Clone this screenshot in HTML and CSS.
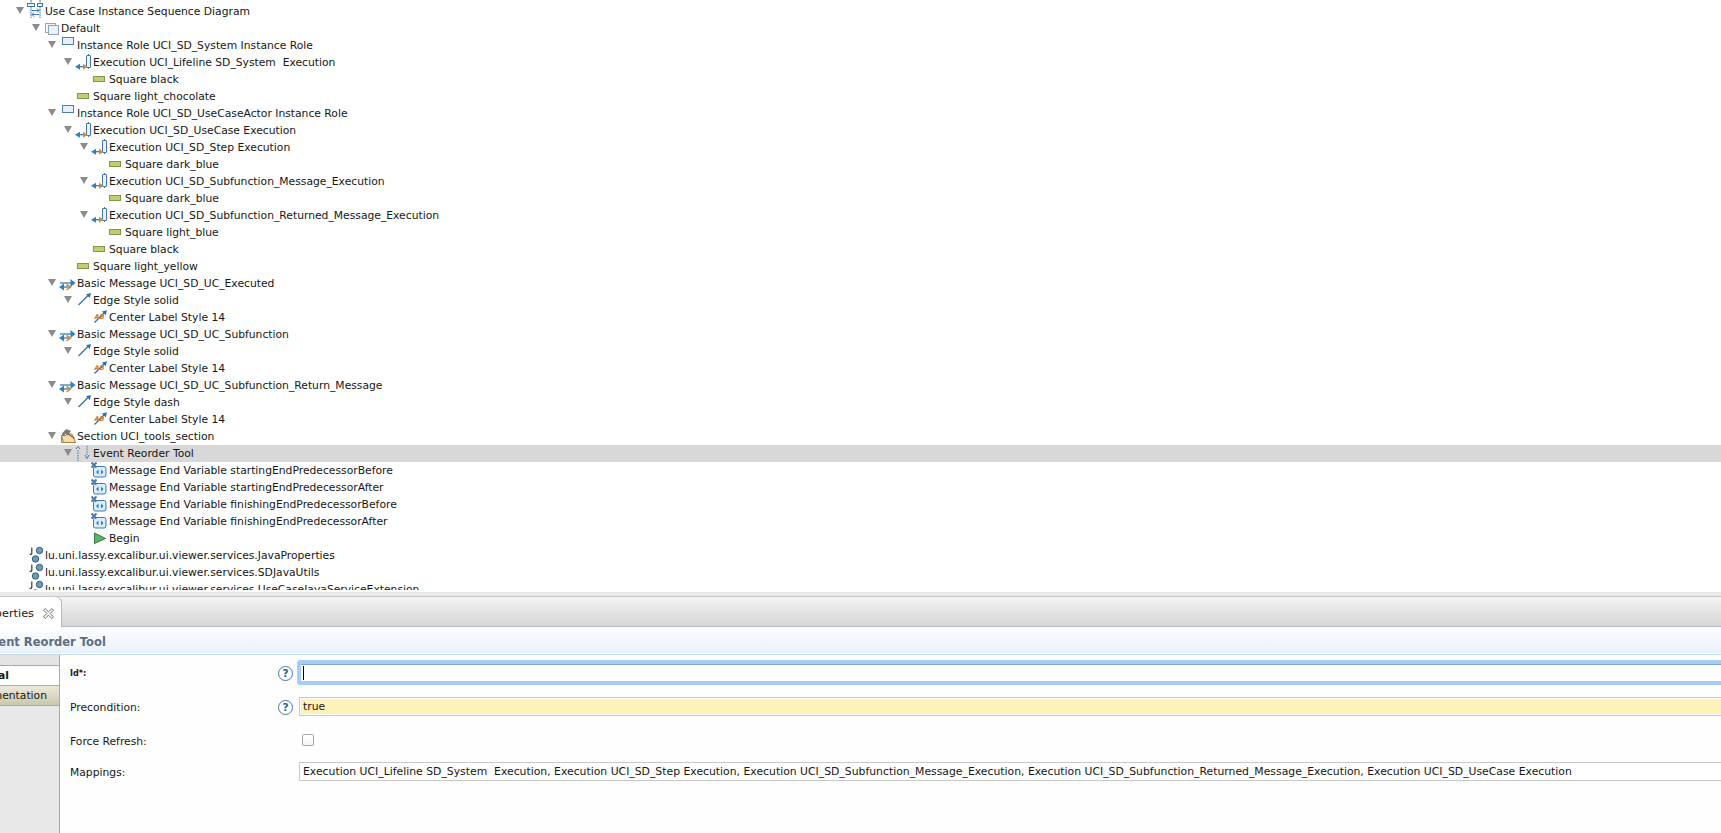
FILE: index.html
```html
<!DOCTYPE html>
<html lang="en"><head><meta charset="utf-8"><title>Use Case Instance Sequence Diagram</title><link rel="stylesheet" href="styles.css"></head>
<body>
<svg class="defs" width="0" height="0" aria-hidden="true"><defs>
<g id="i-diagram"><path d="M2 -3V.5M11 -3V.5M2 3.5V15M11 3.5V15" class="b1" stroke-dasharray="2 .6"/><rect x="-1.5" y=".5" width="7" height="3" class="bx"/><rect x="8.5" y=".5" width="5" height="3" class="bx"/><path d="M3 7.5H10M8 5.5l2 2-2 2M10 11.5H3M5 9.5l-2 2 2 2" class="b1"/></g>
<g id="i-default"><rect x=".5" y="3.5" width="10" height="9" class="pg"/><rect x="3.5" y="5.5" width="10" height="9" class="pf"/></g>
<g id="i-role"><rect x="1.5" y=".5" width="11" height="7" class="bx2"/></g>
<g id="i-exec"><path d="M11.5 0V15" class="b1"/><rect x="9.5" y="1.5" width="4" height="12" rx=".5" class="bx"/><path d="M0 12.7H8" class="b2"/><path d="M-2 12.7L3 9.7V15.7Z" class="fb"/><path d="M10.5 12.7L6 9.7V15.7Z" class="fo"/></g>
<g id="i-square"><rect x=".5" y="5.5" width="11" height="5" class="sq"/></g>
<g id="i-msg"><path d="M-1 8H11" class="b2"/><path d="M14.5 8L9.5 4V12Z" class="fb"/><path d="M1 12H8" class="b2"/><path d="M-2 12L3 8.5V15.5Z" class="fb"/><path d="M5.5 9.5L9.5 12L5.5 15" class="so"/></g>
<g id="i-edge"><path d="M1.5 13L12 2.5" class="b2"/><path d="M14 1L9 2.2L12.8 6Z" class="fd"/></g>
<g id="i-label"><path d="M1.5 13.5L12 3" class="b2"/><path d="M14 1.2L9 2.4L12.8 6.2Z" class="fd"/><text x="1.5" y="9.5" class="ab">AB</text></g>
<g id="i-section"><path d="M.5 7.5H5L6.500 6H11L14.500 14.500H2.500Z" class="fol"/><path d="M.5 7.500V14.500H14.500" class="fos"/><path d="M5.500 4.500L13.500 10.500" class="han"/><path d="M1 6L5 1.500L9.500 3L6.500 7L4.500 5.500L2.500 7.500Z" class="ham"/></g>
<g id="i-tool"><path d="M1 5V16M10 1V11" class="b1" stroke-dasharray="1.500 1"/><path d="M-1 4L1 1.500L3 4M8 10L10 13.500L12 10" class="b1"/></g>
<g id="i-var"><rect x=".5" y="4.500" width="12.500" height="10.500" rx="2" class="vr"/><path d="M3 10L5.500 7.500V12.500ZM10.500 10L8 7.500V12.500Z" class="fb"/><path d="M-1.500 .5L3.500 5.500M3.500 .5L-1.500 5.500" class="xx"/></g>
<g id="i-begin"><path d="M1.500 3L12.500 8.500L1.500 13.500Z" class="beg"/></g>
<g id="i-java"><path d="M2.800 .5V6Q2.800 8 .5 7.200" class="jj"/><circle cx="10.500" cy="3.500" r="3.200" class="jc"/><circle cx="6.500" cy="12" r="3.200" class="jc"/></g>
<g id="i-close"><path d="M.5 2L2 .5L5 3.500L8 .5L9.500 2L6.500 5L9.500 8L8 9.500L5 6.500L2 9.500L.5 8L3.500 5Z" class="cl"/></g>
</defs></svg>

<div class="tree">
<div class="row d0"><i class="tw"></i><svg class="ic" viewBox="0 0 16 17"><use href="#i-diagram"/></svg><span>Use Case Instance Sequence Diagram</span></div>
<div class="row d1"><i class="tw"></i><svg class="ic" viewBox="0 0 16 17"><use href="#i-default"/></svg><span>Default</span></div>
<div class="row d2"><i class="tw"></i><svg class="ic" viewBox="0 0 16 17"><use href="#i-role"/></svg><span>Instance Role UCI_SD_System Instance Role</span></div>
<div class="row d3"><i class="tw"></i><svg class="ic" viewBox="0 0 16 17"><use href="#i-exec"/></svg><span>Execution UCI_Lifeline SD_System  Execution</span></div>
<div class="row d4"><i class="no"></i><svg class="ic" viewBox="0 0 16 17"><use href="#i-square"/></svg><span>Square black</span></div>
<div class="row d3"><i class="no"></i><svg class="ic" viewBox="0 0 16 17"><use href="#i-square"/></svg><span>Square light_chocolate</span></div>
<div class="row d2"><i class="tw"></i><svg class="ic" viewBox="0 0 16 17"><use href="#i-role"/></svg><span>Instance Role UCI_SD_UseCaseActor Instance Role</span></div>
<div class="row d3"><i class="tw"></i><svg class="ic" viewBox="0 0 16 17"><use href="#i-exec"/></svg><span>Execution UCI_SD_UseCase Execution</span></div>
<div class="row d4"><i class="tw"></i><svg class="ic" viewBox="0 0 16 17"><use href="#i-exec"/></svg><span>Execution UCI_SD_Step Execution</span></div>
<div class="row d5"><i class="no"></i><svg class="ic" viewBox="0 0 16 17"><use href="#i-square"/></svg><span>Square dark_blue</span></div>
<div class="row d4"><i class="tw"></i><svg class="ic" viewBox="0 0 16 17"><use href="#i-exec"/></svg><span>Execution UCI_SD_Subfunction_Message_Execution</span></div>
<div class="row d5"><i class="no"></i><svg class="ic" viewBox="0 0 16 17"><use href="#i-square"/></svg><span>Square dark_blue</span></div>
<div class="row d4"><i class="tw"></i><svg class="ic" viewBox="0 0 16 17"><use href="#i-exec"/></svg><span>Execution UCI_SD_Subfunction_Returned_Message_Execution</span></div>
<div class="row d5"><i class="no"></i><svg class="ic" viewBox="0 0 16 17"><use href="#i-square"/></svg><span>Square light_blue</span></div>
<div class="row d4"><i class="no"></i><svg class="ic" viewBox="0 0 16 17"><use href="#i-square"/></svg><span>Square black</span></div>
<div class="row d3"><i class="no"></i><svg class="ic" viewBox="0 0 16 17"><use href="#i-square"/></svg><span>Square light_yellow</span></div>
<div class="row d2"><i class="tw"></i><svg class="ic" viewBox="0 0 16 17"><use href="#i-msg"/></svg><span>Basic Message UCI_SD_UC_Executed</span></div>
<div class="row d3"><i class="tw"></i><svg class="ic" viewBox="0 0 16 17"><use href="#i-edge"/></svg><span>Edge Style solid</span></div>
<div class="row d4"><i class="no"></i><svg class="ic" viewBox="0 0 16 17"><use href="#i-label"/></svg><span>Center Label Style 14</span></div>
<div class="row d2"><i class="tw"></i><svg class="ic" viewBox="0 0 16 17"><use href="#i-msg"/></svg><span>Basic Message UCI_SD_UC_Subfunction</span></div>
<div class="row d3"><i class="tw"></i><svg class="ic" viewBox="0 0 16 17"><use href="#i-edge"/></svg><span>Edge Style solid</span></div>
<div class="row d4"><i class="no"></i><svg class="ic" viewBox="0 0 16 17"><use href="#i-label"/></svg><span>Center Label Style 14</span></div>
<div class="row d2"><i class="tw"></i><svg class="ic" viewBox="0 0 16 17"><use href="#i-msg"/></svg><span>Basic Message UCI_SD_UC_Subfunction_Return_Message</span></div>
<div class="row d3"><i class="tw"></i><svg class="ic" viewBox="0 0 16 17"><use href="#i-edge"/></svg><span>Edge Style dash</span></div>
<div class="row d4"><i class="no"></i><svg class="ic" viewBox="0 0 16 17"><use href="#i-label"/></svg><span>Center Label Style 14</span></div>
<div class="row d2"><i class="tw"></i><svg class="ic" viewBox="0 0 16 17"><use href="#i-section"/></svg><span>Section UCI_tools_section</span></div>
<div class="row d3 sel"><i class="tw"></i><svg class="ic" viewBox="0 0 16 17"><use href="#i-tool"/></svg><span>Event Reorder Tool</span></div>
<div class="row d4"><i class="no"></i><svg class="ic" viewBox="0 0 16 17"><use href="#i-var"/></svg><span>Message End Variable startingEndPredecessorBefore</span></div>
<div class="row d4"><i class="no"></i><svg class="ic" viewBox="0 0 16 17"><use href="#i-var"/></svg><span>Message End Variable startingEndPredecessorAfter</span></div>
<div class="row d4"><i class="no"></i><svg class="ic" viewBox="0 0 16 17"><use href="#i-var"/></svg><span>Message End Variable finishingEndPredecessorBefore</span></div>
<div class="row d4"><i class="no"></i><svg class="ic" viewBox="0 0 16 17"><use href="#i-var"/></svg><span>Message End Variable finishingEndPredecessorAfter</span></div>
<div class="row d4"><i class="no"></i><svg class="ic" viewBox="0 0 16 17"><use href="#i-begin"/></svg><span>Begin</span></div>
<div class="row d0"><i class="no"></i><svg class="ic" viewBox="0 0 16 17"><use href="#i-java"/></svg><span>lu.uni.lassy.excalibur.ui.viewer.services.JavaProperties</span></div>
<div class="row d0"><i class="no"></i><svg class="ic" viewBox="0 0 16 17"><use href="#i-java"/></svg><span>lu.uni.lassy.excalibur.ui.viewer.services.SDJavaUtils</span></div>
<div class="row d0"><i class="no"></i><svg class="ic" viewBox="0 0 16 17"><use href="#i-java"/></svg><span>lu.uni.lassy.excalibur.ui.viewer.services.UseCaseJavaServiceExtension</span></div>
</div>

<div class="sash"></div>
<div class="tabbar">
  <div class="tab"><span>Properties</span><svg class="close" viewBox="0 0 10 10"><use href="#i-close"/></svg></div>
</div>
<div class="formhead"><span>Event Reorder Tool</span></div>
<div class="main">
  <div class="side">
    <div class="s-top"></div>
    <div class="s-item s-on"><span>General</span></div>
    <div class="s-item s-off"><span>Documentation</span></div>
  </div>
  <div class="form">
    <label class="lab lab-id">Id*:</label><span class="help">?</span><div class="field focus"><i class="caret"></i></div>
    <label class="lab">Precondition:</label><span class="help">?</span><div class="field yellow">true</div>
    <label class="lab lab-force">Force Refresh:</label><span></span><div class="checkwrap"><i class="check"></i></div>
    <label class="lab">Mappings:</label><span></span><div class="field mapping">Execution UCI_Lifeline SD_System  Execution, Execution UCI_SD_Step Execution, Execution UCI_SD_Subfunction_Message_Execution, Execution UCI_SD_Subfunction_Returned_Message_Execution, Execution UCI_SD_UseCase Execution</div>
  </div>
</div>
</body></html>
```
FILE: styles.css
```css
*{box-sizing:border-box}
html,body{margin:0;height:100%}
body{width:1721px;height:833px;overflow:hidden;background:#fefefe;color:#161616;font-family:"DejaVu Sans",sans-serif;font-size:10.75px;display:flex;flex-direction:column}
.defs{position:absolute}
.tree{height:590px;flex:none;overflow:hidden;padding-top:3px;background:#fff}
.row{height:17px;display:flex;align-items:center;white-space:pre}
.row span{position:relative;top:-.5px}
.d0{padding-left:16px}.d1{padding-left:32px}.d2{padding-left:48px}.d3{padding-left:64px}.d4{padding-left:80px}.d5{padding-left:96px}
.sel{background:#d8d8d8}
.tw,.no{flex:none;width:13px;height:17px;display:block;position:relative}
.tw::before{content:"";position:absolute;left:0;top:4px;border-left:4.5px solid transparent;border-right:4.5px solid transparent;border-top:7px solid #8b8b8b}
.ic{flex:none;width:16px;height:17px;overflow:visible}
.b1{fill:none;stroke:#3f78ad;stroke-width:1}
.b2{fill:none;stroke:#2f6fa8;stroke-width:1.200}
.bx{fill:#eef4fb;stroke:#3f78ad;stroke-width:1}
.bx2{fill:#e6eff8;stroke:#4a80b0;stroke-width:1}
.pg{fill:#f4f6f8;stroke:#9aa8b8;stroke-width:1}
.pf{fill:#eaf1f9;stroke:#8ea4bc;stroke-width:1}
.fb{fill:#2b82c0}
.fo{fill:#c98a3a}
.fd{fill:#2f6fa8}
.so{fill:none;stroke:#c98a3a;stroke-width:1.500}
.sq{fill:#bdd070;stroke:#849648;stroke-width:1}
.ab{font:italic bold 6.500px "DejaVu Sans",sans-serif;fill:#c9772a}
.fol{fill:#f3dcae;stroke:#a88448;stroke-width:1}
.fos{fill:none;stroke:#a88448;stroke-width:1}
.han{fill:none;stroke:#9a6b30;stroke-width:1.500}
.ham{fill:#7d7d7d;stroke:#555;stroke-width:.5}
.vr{fill:#dcebf8;stroke:#3f78ad;stroke-width:1}
.xx{fill:none;stroke:#4a7aa8;stroke-width:2}
.beg{fill:#62b266;stroke:#2f7f4a;stroke-width:1}
.jj{fill:none;stroke:#3a3a3a;stroke-width:1.200}
.jc{fill:#6d9bb8;stroke:#2f5f80;stroke-width:1}
.cl{fill:#fff;stroke:#555;stroke-width:.8}

.sash{flex:none;height:7px;border-top:2px solid #fff;background:#e9e9e9;border-bottom:1px solid #c6c6c6}
.tabbar{flex:none;height:30px;display:flex;background:linear-gradient(#f3f3f3,#d6d6d6);border-bottom:1px solid #b4b8c6}
.tab{width:62px;height:31px;margin-top:-1px;background:#fff;border-right:1px solid #b4b8c6;border-top:1px solid #c6c6c6;border-top-right-radius:7px;display:flex;align-items:center;justify-content:flex-end;gap:9px;padding:2px 7px 0 0;overflow:hidden;white-space:nowrap;position:relative;z-index:1;font-size:11.300px}
.tab span{flex:none}
.close{flex:none;width:11px;height:11px}
.formhead{flex:none;height:28px;background:linear-gradient(#fdfeff 0,#e8f1fa 92%,#fff 92%,#fff 96%,#c5daf0 96%);display:flex;align-items:center;overflow:hidden;white-space:nowrap;font-weight:bold;font-size:11.500px;color:#5d6c80}
.formhead span{margin-left:-17px;position:relative;top:1px}
.main{flex:1;display:flex;min-height:0}
.side{flex:none;width:60px;background:#e8e8e8;border-right:1px solid #a9a9a9;overflow:hidden}
.s-top{height:11px;background:#e4e4e4;border-bottom:1px solid #a9a9a9}
.s-item{display:flex;justify-content:flex-end;align-items:center;white-space:nowrap;overflow:hidden}
.s-item span{flex:none}
.s-on{height:19px;width:60px;margin-right:-1px;background:#fff;font-weight:bold;padding-right:51px;position:relative}
.s-off{height:21px;background:linear-gradient(#eceadc,#c9c7ab);border:1px solid #a9a9a9;border-left:0;border-right:0;padding-right:12px}
.form{flex:1;min-width:0;display:grid;grid-template-columns:208px 19px 1fr;grid-template-rows:25px 19px 22px 19px;row-gap:12px;align-items:center;padding:5px 0 0 10px;margin-right:-4px}
.lab{white-space:nowrap;padding-top:2px}
.lab-id{font-size:8px;font-weight:bold}
.lab-force{padding-top:4px}
.help{width:15px;height:15px;border:1.300px solid #3f78ad;border-radius:50%;background:#fff;color:#2b5f90;font-weight:bold;font-size:10.500px;line-height:13px;text-align:center;margin-top:2px}
.field{height:19px;margin-left:2px;border:1px solid #c8c8c8;background:#fff;padding:1px 0 0 3px;line-height:16px;white-space:pre;overflow:hidden}
.mapping{font-size:10.840px}
.yellow{background:#fdf2b8;box-shadow:inset 0 0 0 1px #fff}
.focus{height:25px;margin-left:0;border:4px solid #a6cdf6;border-radius:3px;box-shadow:inset 0 1px 0 #7ea9d8;padding:0}
.caret{display:block;width:1px;height:14px;background:#000;margin:2px 0 0 2px}
.checkwrap{padding:2px 0 0 5px;height:22px;display:flex;align-items:center}
.check{display:block;width:12px;height:12px;border:1px solid #a9a9a9;border-radius:2px;background:linear-gradient(#fff,#f4f4f4)}
```
